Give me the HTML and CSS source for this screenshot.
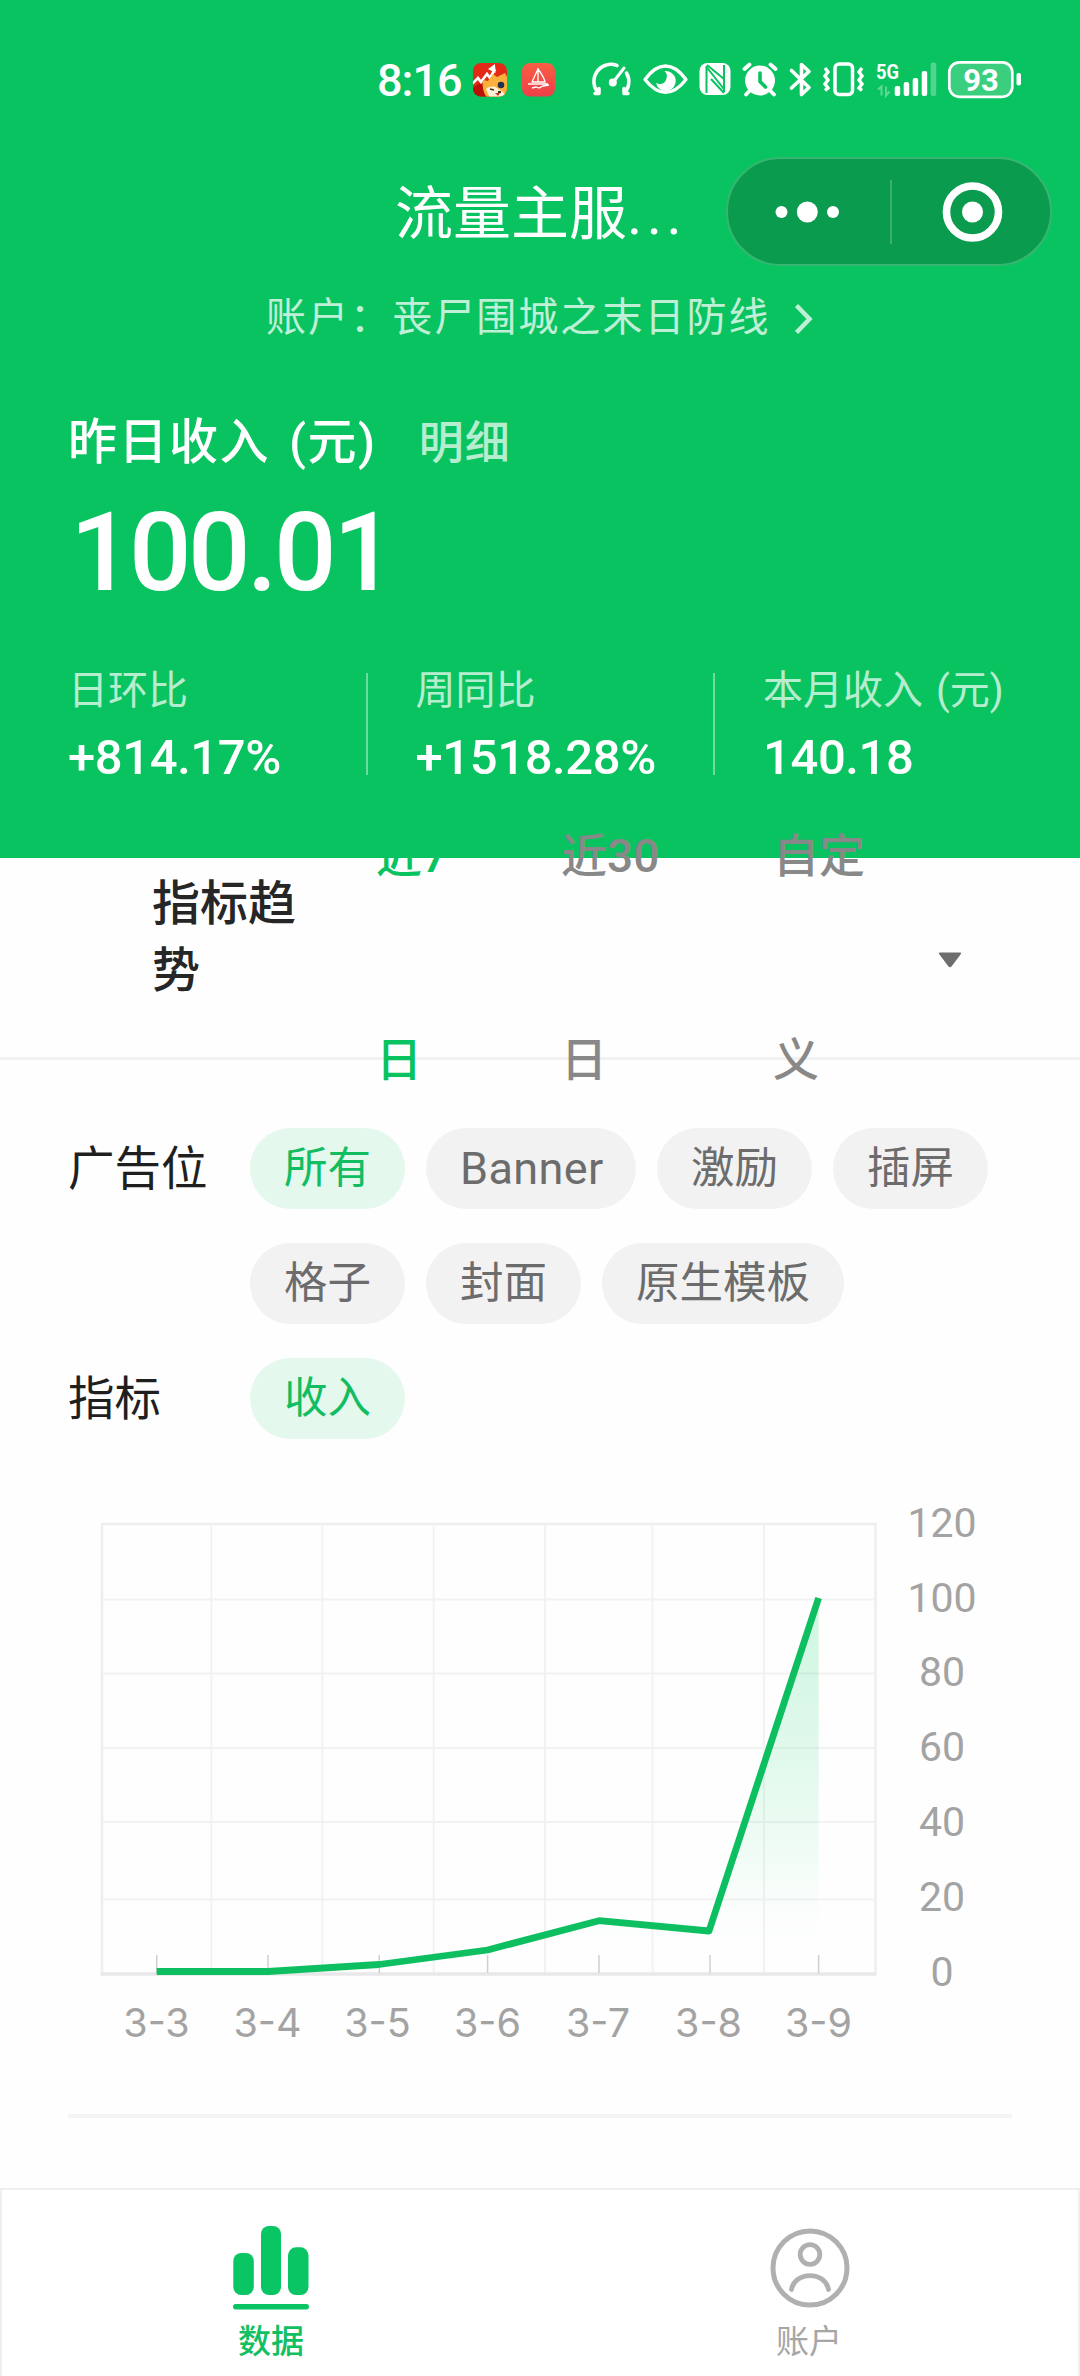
FILE: index.html
```html
<!DOCTYPE html>
<html lang="zh-CN">
<head>
<meta charset="utf-8">
<title>流量主服务</title>
<link rel="stylesheet" href="styles.css">
</head>
<body>
<div class="page">
  <header class="hero">
    <div class="status">
      <span class="clock">8:16</span>
      <svg class="status-icons" viewBox="470 54 560 52" width="560" height="52">
        <defs>
          <linearGradient id="sail" x1="0" y1="0" x2="0" y2="1"><stop offset="0" stop-color="#f95f43"/><stop offset="1" stop-color="#ee3f49"/></linearGradient>
          <clipPath id="app"><rect x="473" y="63" width="34" height="33.5" rx="8"/></clipPath>
        </defs>
        <g clip-path="url(#app)">
          <rect x="473" y="63" width="34" height="34" fill="#e32a16"/>
          <path d="M473 88l8-6 5 16h-13z" fill="#b81208"/>
          <path d="M472 84l6-6 3 4 6-8 3 4 5-9" fill="none" stroke="#fff" stroke-width="2.6"/>
          <path d="M488 69l7-5 .5 9z" fill="#fff"/>
          <path d="M483 80l5 1 5-7 4 3 8-4 4 8v18h-20c-5-4-7-10-6-19z" fill="#f9b03c"/>
          <path d="M486 89c4-3 8-3 11-1l6 4 4 6h-17z" fill="#fff0d9"/>
          <circle cx="501" cy="85" r="3.3" fill="#25314c"/>
          <path d="M490 89l4 1M498 92l3 0" stroke="#4b2a1b" stroke-width="1.8" fill="none"/>
          <path d="M495 93h5l-2 3z" fill="#d83424"/>
        </g>
        <rect x="522" y="63" width="33" height="33.500" rx="8" fill="url(#sail)"/>
        <path d="M538 68v14M538 69l-6 13h13c-1-5-4-9-7-13M528 84h20M532 88l4-1 3 1 4-2 6-1" fill="none" stroke="#fff" stroke-width="1.3"/>
        <g fill="none" stroke="#fff" stroke-linecap="round" stroke-linejoin="round">
          <path d="M599 93.500A17 17 0 0 1 617 65.500M626.500 73A17 17 0 0 1 624 93.500M599 93.500v-5M599 93.500h-4M624 93.500v-5M624 93.500h4" stroke-width="3.500"/>
          <path d="M613 82.500l11-14.500" stroke-width="3"/>
          <path d="M645 79.500c13-18 28-18 41 0c-13 17-28 17-41 0z" stroke-width="3.300"/>
        </g>
        <circle cx="612.800" cy="82.500" r="4" fill="#fff"/>
        <path d="M664.500 71a10 10 0 1 1-8.500 12c4 2 8 1 9.500-2c2-4 2-7-1-10z" fill="#fff"/>
        <rect x="699.500" y="63" width="31" height="32" rx="8" fill="#fff"/>
        <path d="M706.500 66v27M724 65v27M706.500 67l17 21.500M711 79l13 14M707 65l17 14" fill="none" stroke="#09c360" stroke-width="2"/>
        <circle cx="760" cy="80.500" r="15" fill="#fff"/>
        <path d="M744.500 69l5-4.500M775.500 69l-5-4.500M749.500 91l-3.500 3.500M770.500 91l3.500 3.500" stroke="#fff" stroke-width="3.800" stroke-linecap="round"/>
        <path d="M760 73v8.500l5.500 5.500" fill="none" stroke="#09c360" stroke-width="3.600" stroke-linecap="round"/>
        <path d="M791.500 70.500l17.500 17l-7.500 7v-30l7.500 7l-17.500 16.500" fill="none" stroke="#fff" stroke-width="3.600" stroke-linejoin="round" stroke-linecap="round"/>
        <rect x="835" y="64" width="17.500" height="30.500" rx="4" fill="none" stroke="#fff" stroke-width="3.500"/>
        <path d="M825 68l3 4-3 4 3 4-3 4 3 4-3 2.500M862 68l-3 4 3 4-3 4 3 4-3 4 3 2.500" fill="none" stroke="#fff" stroke-width="3.400"/>
        <text class="net" x="876" y="78.500" textLength="23" lengthAdjust="spacingAndGlyphs">5G</text>
        <path d="M878 89.500l3.500-3v9M886 86.500v9l3.500-4" fill="none" stroke="#fff" stroke-opacity=".35" stroke-width="2"/>
        <g fill="#fff">
          <rect x="894.700" y="86" width="5.500" height="10" rx="2"/>
          <rect x="903.700" y="82" width="5.500" height="14" rx="2"/>
          <rect x="912.700" y="78" width="5.500" height="18" rx="2"/>
          <rect x="921.700" y="71" width="5.500" height="25" rx="2"/>
          <rect x="930.700" y="62.500" width="5.500" height="33.500" rx="2" opacity=".3"/>
          <rect x="1016.500" y="73" width="4.500" height="12.500" rx="2"/>
        </g>
        <rect x="949.300" y="62.300" width="63" height="34.500" rx="10" fill="#fff" fill-opacity=".2" stroke="#fff" stroke-width="2.700"/>
        <text class="battery" x="981" y="91" text-anchor="middle">93</text>
      </svg>
    </div>

    <div class="nav">
      <h1 class="nav-title">流量主服<span class="dots">...</span></h1>
      <div class="capsule">
        <svg viewBox="0 0 162 106" width="162" height="106" fill="#fff"><circle cx="53.500" cy="53" r="6"/><circle cx="79.300" cy="53" r="10.500"/><circle cx="105" cy="53" r="6"/></svg>
        <span class="capsule-line"></span>
        <svg viewBox="0 0 160 106" width="160" height="106"><circle cx="82.500" cy="53" r="26" fill="none" stroke="#fff" stroke-width="7.600"/><circle cx="82.500" cy="53" r="10.500" fill="#fff"/></svg>
      </div>
    </div>

    <div class="account">
      <span>账户：丧尸围城之末日防线</span>
      <svg viewBox="0 0 24 36" width="24" height="36"><path d="M4.500 4.500l13 13.500l-13 13.500" fill="none" stroke="#fff" stroke-width="4.500"/></svg>
    </div>

    <div class="income-label"><span class="income-name">昨日收入</span><span class="income-unit">(元)</span><span class="detail">明细</span></div>
    <div class="amount">100.01</div>

    <div class="stats">
      <div class="stat"><div class="stat-name">日环比</div><div class="stat-value">+814.17%</div></div>
      <div class="stat lined"><div class="stat-name">周同比</div><div class="stat-value">+1518.28%</div></div>
      <div class="stat lined"><div class="stat-name">本月收入<span class="stat-unit">(元)</span></div><div class="stat-value">140.18</div></div>
    </div>
  </header>

  <section class="trend">
    <h2 class="trend-title">指标趋<br>势</h2>
    <div class="range active">近7<br>日</div>
    <div class="range month">近30<br>日</div>
    <div class="range custom">自定<br>义</div>
    <svg class="caret" viewBox="0 0 24 16" width="24" height="16"><path d="M2 .5h20q2 0 .7 1.700l-9 12q-1.700 2-3.400 0l-9-12q-1.300-1.700 .7-1.700z" fill="#6e6e6e"/></svg>
  </section>

  <section class="filters">
    <div class="filter-row">
      <div class="filter-label">广告位</div>
      <div class="chips">
        <span class="chip on">所有</span><span class="chip latin">Banner</span><span class="chip">激励</span><span class="chip">插屏</span>
        <span class="chip">格子</span><span class="chip">封面</span><span class="chip">原生模板</span>
      </div>
    </div>
    <div class="filter-row">
      <div class="filter-label">指标</div>
      <div class="chips"><span class="chip on">收入</span></div>
    </div>
  </section>

  <svg class="chart" viewBox="0 1500 1080 550" width="1080" height="550">
    <defs><linearGradient id="area" x1="0" y1="1598" x2="0" y2="1973" gradientUnits="userSpaceOnUse"><stop offset="0" stop-color="#12d46c" stop-opacity=".2"/><stop offset=".45" stop-color="#12d46c" stop-opacity=".12"/><stop offset=".85" stop-color="#12d46c" stop-opacity=".01"/><stop offset="1" stop-color="#12d46c" stop-opacity="0"/></linearGradient></defs>
    <path d="M101 1599.500H876M101 1673.500H876M101 1748H876M101 1822H876M101 1899.500H876M211.300 1524V1973M322.300 1524V1973M433.700 1524V1973M545 1524V1973M652.500 1524V1973M764 1524V1973" fill="none" stroke="#f2f2f2" stroke-width="2"/>
    <path d="M102 1973V1524H875.500V1973" fill="none" stroke="#eee" stroke-width="2.500"/>
    <path d="M100.500 1974H876.500" stroke="#e8e8ea" stroke-width="3.500"/>
    <path d="M156.700 1955V1973M268 1955V1973M379.300 1955V1973M487.600 1955V1973M599 1955V1973M710 1955V1973M818.600 1955V1973" stroke="#cfcfcf" stroke-width="1.500"/>
    <path d="M156.700 1971.500H268L379 1964.500L487.600 1950L599 1920.700L709 1931L818.600 1598V1973H156.700z" fill="url(#area)"/>
    <path d="M156.700 1971.500H268L379 1964.500L487.600 1950L599 1920.700L709 1931L818.600 1598" fill="none" stroke="#0dbf60" stroke-width="6.800" stroke-linejoin="round"/>
    <g class="axis">
      <text x="942" y="1537">120</text><text x="942" y="1611.500">100</text><text x="942" y="1686">80</text><text x="942" y="1760.500">60</text><text x="942" y="1835.500">40</text><text x="942" y="1910.500">20</text><text x="942" y="1985.500">0</text>
    </g>
    <g class="axis dates">
      <text x="156.500" y="2036.500">3-3</text><text x="267.500" y="2036.500">3-4</text><text x="377.500" y="2036.500">3-5</text><text x="487.500" y="2036.500">3-6</text><text x="598" y="2036.500">3-7</text><text x="708.500" y="2036.500">3-8</text><text x="818.500" y="2036.500">3-9</text>
    </g>
  </svg>
  <div class="rule"></div>

  <nav class="tabbar">
    <div class="tab current">
      <svg viewBox="0 0 90 90" width="90" height="90" fill="#09c564"><rect x="7.300" y="33" width="20.500" height="42" rx="8"/><rect x="35" y="6" width="20" height="69" rx="8"/><rect x="62" y="27.300" width="20.500" height="47.700" rx="8"/><rect x="7" y="84" width="76" height="5.500" rx="2.700"/></svg>
      <span>数据</span>
    </div>
    <div class="tab">
      <svg viewBox="0 0 90 90" width="90" height="90" fill="none" stroke="#b0b0b0" stroke-linecap="round"><circle cx="46" cy="48" r="37" stroke-width="5"/><circle cx="46" cy="34.500" r="9.800" stroke-width="4.800"/><path d="M27.500 69.500C31 51 61 51 64.500 69.500" stroke-width="4.800"/></svg>
      <span>账户</span>
    </div>
  </nav>
</div>
</body>
</html>
```
FILE: styles.css
```css
* { box-sizing: border-box; }
body {
  margin: 0;
  background: #fff;
  font-family: Roboto, "Noto Sans CJK SC", sans-serif;
}
svg { display: block; flex: none; }
.page {
  display: flex;
  flex-direction: column;
  width: 1080px;
  height: 2376px;
  overflow: hidden;
  background: #fefefe;
}

/* header */
.hero {
  flex: none;
  height: 858px;
  padding-top: 54px;
  background: #09c360;
  color: #fff;
}
.status { display: flex; height: 52px; padding-left: 377px; }
.clock {
  width: 93px;
  font-size: 45px;
  font-weight: 500;
  line-height: 54px;
  letter-spacing: -1px;
  white-space: nowrap;
}
.net { font: 700 21px Roboto, sans-serif; fill: #fff; }
.battery { font: 700 31px Roboto, sans-serif; fill: #fff; }

.nav {
  display: flex;
  align-items: center;
  height: 109px;
  margin-top: 51px;
  padding: 0 28px 0 395px;
}
.nav-title {
  margin: 0;
  padding-top: 5px;
  font-size: 58px;
  font-weight: 400;
  line-height: 104px;
  white-space: nowrap;
}
.dots { letter-spacing: 4.5px; }
.capsule {
  display: flex;
  align-items: center;
  width: 326px;
  height: 109px;
  margin-left: auto;
  border: 2px solid #37b671;
  border-radius: 55px;
  background: #0a9b4e;
}
.capsule-line { flex: none; width: 2px; height: 64px; margin-right: -2px; background: #3bae71; }

.account {
  display: flex;
  align-items: center;
  height: 60px;
  margin-top: 22px;
  padding-left: 266px;
  font-size: 40px;
  letter-spacing: 2.050px;
  line-height: 60px;
  opacity: .74;
}
.account svg { margin: 1px 0 0 21px; }

.income-label {
  display: flex;
  height: 60px;
  margin-top: 65px;
  padding-left: 68px;
  font-size: 49px;
  font-weight: 500;
  line-height: 60px;
  letter-spacing: 1.5px;
  white-space: nowrap;
}
.income-unit { margin-left: 19px; }
.detail { margin: 1px 0 0 42px; font-size: 45px; letter-spacing: 1px; opacity: .7; }
.amount {
  height: 120px;
  margin-top: 20px;
  padding-left: 70px;
  font-size: 110px;
  font-weight: 500;
  line-height: 120px;
  letter-spacing: -3.500px;
}
.stats { display: flex; height: 122px; margin-top: 52px; padding-left: 68px; }
.stat { position: relative; flex: none; width: 347.500px; white-space: nowrap; }
.lined::before {
  content: "";
  position: absolute;
  left: -50px;
  top: 8px;
  width: 2px;
  height: 102px;
  background: #6bdd9f;
}
.stat-name { font-size: 40px; line-height: 52px; opacity: .7; }
.stat-unit { margin-left: 13px; }
.stat-value { margin-top: 11px; font-size: 49px; font-weight: 500; line-height: 60px; letter-spacing: -.4px; }

/* trend bar */
.trend {
  position: relative;
  display: flex;
  flex: none;
  align-items: center;
  height: 202px;
  padding-left: 152px;
  border-bottom: 3px solid #f1f1f2;
}
.trend-title {
  width: 224px;
  margin: 0;
  padding-bottom: 41px;
  color: #262626;
  font-size: 48px;
  font-weight: 500;
  line-height: 67px;
}
.range {
  flex: none;
  width: 185px;
  padding-top: 1px;
  color: #888;
  font-size: 46px;
  font-weight: 500;
  line-height: 204px;
  white-space: nowrap;
}
.month { width: 212px; }
.custom { width: 165px; }
.active { color: #09c360; }
.caret { margin-top: 4px; }

/* filters */
.filters { display: flex; flex: none; flex-direction: column; gap: 34px; padding: 68px 0 0 68px; }
.filter-row { display: flex; }
.filter-label { flex: none; width: 182px; color: #1f1f1f; font-size: 46.500px; line-height: 82px; }
.chips { display: flex; flex-wrap: wrap; gap: 34px 21px; width: 780px; }
.chip {
  height: 81px;
  padding: 0 34px;
  border-radius: 41px;
  background: #f2f2f2;
  color: #6c6c6c;
  font-size: 43.500px;
  line-height: 81px;
}
.on { background: #e4f8ed; color: #12bd62; }
.latin { width: 210px; font-size: 45px; letter-spacing: .4px; }

/* chart */
.filter-row:last-child { height: 81px; }
.chart { margin-top: 61px; }
.axis { fill: #a3a3a3; font: 400 41px Roboto, sans-serif; text-anchor: middle; }
.dates { font: 400 39.500px Inter, sans-serif; }
.rule { flex: none; width: 944px; height: 4px; margin: 64px 0 0 68px; background: #f4f4f4; }

/* tab bar */
.tabbar {
  display: flex;
  flex: none;
  height: 188px;
  margin-top: auto;
  border: 2px solid #efefef;
  border-bottom: 0;
  background: #fff;
}
.tab {
  display: flex;
  flex: 1;
  flex-direction: column;
  align-items: center;
  gap: 10px;
  padding-top: 30px;
  color: #a6a6a6;
  font-size: 33px;
  line-height: 44px;
}
.current { color: #12bf63; font-weight: 500; }
```
